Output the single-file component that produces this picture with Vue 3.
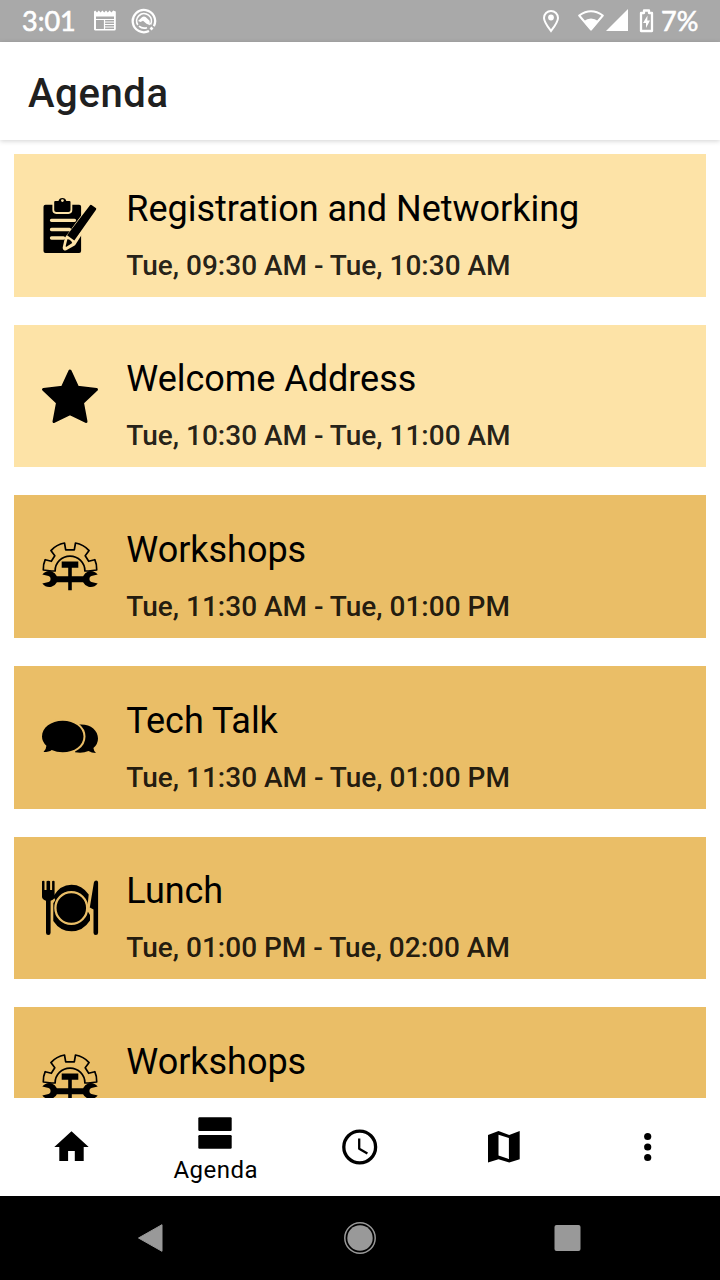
<script setup>
const sessions = [
  { title: 'Registration and Networking', time: 'Tue, 09:30 AM - Tue, 10:30 AM', icon: 'clipboard', tone: 'light' },
  { title: 'Welcome Address', time: 'Tue, 10:30 AM - Tue, 11:00 AM', icon: 'star', tone: 'light' },
  { title: 'Workshops', time: 'Tue, 11:30 AM - Tue, 01:00 PM', icon: 'workshop', tone: 'dark' },
  { title: 'Tech Talk', time: 'Tue, 11:30 AM - Tue, 01:00 PM', icon: 'chat', tone: 'dark' },
  { title: 'Lunch', time: 'Tue, 01:00 PM - Tue, 02:00 AM', icon: 'meal', tone: 'dark' },
  { title: 'Workshops', icon: 'workshop', tone: 'dark' },
]
</script>

<template>
  <div class="screen">
    <div class="status">
      <span class="clock">3:01</span>
      <svg class="news" width="24" height="24" viewBox="0 0 24 24">
        <path fill="#fff" fill-rule="evenodd" d="M1 2.500l1.200-1 1.800 2 1.800-2 1.800 2 1.800-2 1.800 2 1.800-2 1.800 2 1.800-2 1.800 2 1.800-2 2.600 1v17.500a1.500 1.500 0 0 1-1.500 1.500h-19A1.500 1.500 0 0 1 1 20.500zM3 7.500v12.500h18V7.500z" />
        <path stroke="#fff" stroke-width="1.200" fill="none" d="M3 10.500h18M11.500 10.500v9.500M12 13h9M12 15.500h9M12 18h9" />
      </svg>
      <svg class="disc" width="26" height="26" viewBox="0 0 26 26">
        <path d="M18 23.100A11.200 11.200 0 1 1 22.900 18.200" fill="none" stroke="#fff" stroke-width="2.300" />
        <path d="M6.800 17A7.400 7.400 0 1 1 19.500 16.500" fill="none" stroke="#fff" stroke-width="1.700" />
        <path d="M7 13l4-3.800q1.800-1.500 3.600-.2l4 3.700.4 4.600-3.500-1.500-3.500-3-2.500 1.300z" fill="#fff" />
        <path d="M8 18.200q3.500 3 8 1.500" fill="none" stroke="#fff" stroke-width="1.700" />
        <path d="M19.500 19.500l2 2" stroke="#fff" stroke-width="2.600" />
      </svg>
      <span class="fill"></span>
      <svg class="pin" width="18" height="24" viewBox="0 0 18 24">
        <path d="M9 22C5.600 17.500 2 13 2 9a7 7 0 0 1 14 0c0 4-3.600 8.500-7 13z" fill="none" stroke="#fff" stroke-width="2" />
        <circle cx="9" cy="8.500" r="2.900" fill="#fff" />
      </svg>
      <svg class="wifi" width="28" height="24" viewBox="0 0 28 24">
        <path d="M14 20.500L2.200 6.500Q14-2 25.800 6.500z" fill="none" stroke="#fff" stroke-width="2" stroke-linejoin="round" />
        <path d="M14 21.500L6.500 12.200Q14 6.800 21.500 12.200z" fill="#fff" />
      </svg>
      <svg class="signal" width="22" height="24" viewBox="0 0 22 24"><path d="M0 22L22 0v22z" fill="#fff" /></svg>
      <svg class="battery" width="15" height="24" viewBox="0 0 15 24">
        <path d="M2 4h3V1.500h5V4h3v18H2z" fill="none" stroke="#fff" stroke-width="2.300" stroke-linejoin="round" />
        <path d="M8.500 6.500L4 14h3v5l4-7.500H8.300z" fill="#fff" />
      </svg>
      <span class="percent">7%</span>
    </div>

    <header class="header"><h1>Agenda</h1></header>

    <main class="list">
      <article v-for="(s, i) in sessions" :key="i" :class="['card', s.tone]">
        <svg class="icon" viewBox="0 0 60 60">
          <g v-if="s.icon === 'clipboard'">
            <rect x="3.500" y="8.700" width="37.600" height="48.200" rx="2" />
            <path d="M15.200 5.500h3.300a4 4 0 0 1 7.800 0h3.200q1 0 1 1v7.600q0 2-2 2H16.200q-2 0-2-2V6.500q0-1 1-1z" class="cut" stroke-width="3.600" />
            <path d="M15.200 5h3.300a4 4 0 0 1 7.800 0h3.200q1 0 1 1v8.100q0 2-2 2H16.200q-2 0-2-2V6q0-1 1-1z" />
            <circle cx="22.400" cy="4.600" r="1.400" class="cutfill" />
            <path d="M11.500 24.300h23M11.500 33.500h18M11.500 42h12" class="cut" stroke-width="3.300" stroke-linecap="round" />
            <path d="M50.700 9.200L26.300 42.500l-2 9q-.1 1.600 1.600 1.200l8-4.500L56.200 13z" class="cut" stroke-width="3.200" stroke-linejoin="round" />
            <path d="M50.300 9.200L26.300 42l-2.200 10q-.1 1.600 1.600 1.200l8.500-5.200z" class="cutfill" />
            <path d="M50 9.200q.6-.9 1.500-.2l4.300 3.100q.9.700.2 1.600L34.300 44.600l-7.300-5.300z" />
            <path d="M27.400 43.200q3.800.3 4.800 3.900l-5.700 3.600q-1 .4-.8-.7z" />
          </g>
          <path v-else-if="s.icon === 'star'" stroke="#000" stroke-width="3" stroke-linejoin="round"
            d="M30 4l7.500 16.200L56.500 22.500l-14 13.200L46 54.500 30 46.700 14 54.500l3.500-18.800L3.500 22.500l19-2.300z" />
          <g v-else-if="s.icon === 'workshop'">
            <path fill="none" stroke="#000" stroke-width="1.700" stroke-linejoin="round"
              d="M3.300 33Q3 27.500 5.200 22.700l6.100 1.600 3.500-5.500-3.900-5.200Q16.500 7.300 24.500 6l1.200 6.800h8.600L35.500 6q8 1.300 13.600 7.600l-3.900 5.200 3.500 5.500 6.100-1.600Q57 27.500 56.700 33l-8.500 1h-3.300a14.900 14.900 0 0 0-29.800 0h-3.300z" />
            <path d="M21.700 24.500h16.600v6.200h-6.500v22.500h-3.600V30.700h-6.500z" />
            <path d="M2.300 37.600Q6 33 11.500 34.300q3.800 1.300 5.400 5h26.200q1.600-3.700 5.400-5 5.500-1.300 9.200 3.300l-6.300 1.400q-2 .6-2 3t2 2.900l6.300 1.500q-3.700 4.600-9.200 3.300-3.800-1.200-5.400-4.500H16.900q-1.600 3.300-5.400 4.500-5.500 1.300-9.200-3.300l6.300-1.500q2-.5 2-2.900t-2-3z" />
          </g>
          <g v-else-if="s.icon === 'chat'">
            <path d="M39 16.500C50 15.500 58 22 58 30.500q0 5.700-4.600 9.500.2 2.600 2.600 5-4.500 0-7.500-2-6 2.600-13.500 1.200z" />
            <path d="M22.700 12.700C34.500 12.700 43.500 19.500 43.500 28.500S34.500 44.300 22.700 44.300q-6 0-11-2.300-2.600 2-8.200 2 2.800-2.800 2.900-6.300Q2 33.700 2 28.500C2 19.500 11 12.700 22.700 12.700z" class="cut" stroke-width="4" />
            <path d="M22.700 12.700C34.500 12.700 43.500 19.500 43.500 28.500S34.500 44.300 22.700 44.300q-6 0-11-2.300-2.600 2-8.200 2 2.800-2.800 2.900-6.300Q2 33.700 2 28.500C2 19.500 11 12.700 22.700 12.700z" />
          </g>
          <g v-else>
            <path d="M13.200 17.500Q20 5.700 31.500 5.700 42 5.700 48.700 15.500L47.500 27v5L50 36v5.500Q43 52.300 31.500 52.300 20 52.300 13.300 42V24.200l2-3.200z" />
            <circle cx="31.300" cy="29" r="15.900" class="cut" stroke-width="2.300" />
            <path d="M2 2.500q0-.8 1.300-.8t1.200.8V11h2V2.500q0-.8 1.800-.8t1.800.8V11h2V2.500q0-.8 1.200-.8t1.300.8v15.300q0 2.700-4 4v32q0 2.200-2.300 2.200t-2.300-2.200v-32q-4-1.300-4-4z" />
            <path d="M56.200 1.500q1.900 0 1.900 2v50.300q0 2.200-2.300 2.200t-2.300-2.200V30.500l-3.700-2L53.900 3.500q.5-2 2.300-2z" />
          </g>
        </svg>
        <div class="copy">
          <h2>{{ s.title }}</h2>
          <p v-if="s.time">{{ s.time }}</p>
        </div>
      </article>
    </main>

    <nav class="tabs">
      <div class="tab">
        <svg width="40" height="40" viewBox="0 0 40 40"><path d="M19.500 4.300L36.700 20h-5v14h-8.900V24h-6.700v10H7.300V20h-5z" /></svg>
      </div>
      <div class="tab active">
        <svg width="34" height="32" viewBox="0 0 34 32"><rect x=".3" y=".3" width="33.400" height="13.700" rx="1.200" /><rect x=".3" y="18" width="33.400" height="13.700" rx="1.200" /></svg>
        <span>Agenda</span>
      </div>
      <div class="tab">
        <svg width="40" height="40" viewBox="0 0 40 40">
          <circle cx="19.700" cy="20" r="15.900" fill="none" stroke="#000" stroke-width="3.300" />
          <path d="M19.200 11.500v10.200l8.200 4.800" fill="none" stroke="#000" stroke-width="2.300" stroke-linejoin="round" />
        </svg>
      </div>
      <div class="tab">
        <svg width="40" height="40" viewBox="0 0 40 40"><path fill-rule="evenodd" d="M4 8l10.500-4 10.700 3.900L35.700 4v28.200L25.200 35.500 14.500 32.200 4 35.500zM14.500 7.800v20.700l10.400 3.500V11z" /></svg>
      </div>
      <div class="tab">
        <svg width="40" height="40" viewBox="0 0 40 40"><circle cx="19.700" cy="9.500" r="3.600" /><circle cx="19.700" cy="20" r="3.600" /><circle cx="19.700" cy="30.500" r="3.600" /></svg>
      </div>
    </nav>

    <div class="system">
      <svg width="40" height="40" viewBox="0 0 40 40"><path d="M8.500 20L32 6.700v26.600z" fill="#999" stroke="#999" stroke-linejoin="round" /></svg>
      <svg width="40" height="40" viewBox="0 0 40 40"><circle cx="20" cy="20" r="12.700" fill="#999" /><circle cx="20" cy="20" r="15.200" fill="none" stroke="#999" stroke-width="1.500" /></svg>
      <svg width="40" height="40" viewBox="0 0 40 40"><rect x="6.500" y="7" width="26" height="26" rx="2" fill="#999" /></svg>
    </div>
  </div>
</template>

<style>
body { background: #fff; }
</style>

<style scoped>
.screen { width: 720px; height: 1280px; display: flex; flex-direction: column; overflow: hidden; background: #fff; font-family: Roboto, sans-serif; color: #000; }
svg { display: block; flex: none; }
h1, h2, p { margin: 0; font-weight: 400; white-space: nowrap; }
.status { height: 42px; flex: none; background: #a9a9a9; color: #fff; display: flex; align-items: center; padding: 0 22px; box-sizing: border-box; font-family: Lato, sans-serif; -webkit-text-stroke: .6px #fff; }
.clock { width: 71px; font-size: 27px; line-height: 30px; margin-top: -1px; }
.disc { margin-left: 14px; }
.fill { flex: 1; }
.pin { margin-right: 17px; }
.wifi { margin-right: 1px; }
.signal { margin-right: 11px; }
.battery { margin-right: 7.500px; }
.percent { width: 37px; font-size: 27px; line-height: 30px; margin-top: -1px; white-space: nowrap; }
.header { height: 98px; flex: none; display: flex; align-items: center; padding: 6px 28px 0; box-sizing: border-box; background: #fff; box-shadow: 0 1px 5px rgba(0, 0, 0, .18); position: relative; z-index: 1; }
h1 { font-size: 40px; line-height: 48px; font-weight: 500; letter-spacing: .6px; color: #202020; }
.list { flex: 1; min-height: 0; overflow: hidden; padding: 14px 14px 0; display: flex; flex-direction: column; gap: 28.2px; }
.card { height: 142.500px; flex: none; box-sizing: border-box; padding: 32px 26px 0; display: flex; }
.light { background: #fde3a7; --tone: #fde3a7; }
.dark { background: #eabe67; --tone: #eabe67; }
.icon { width: 60px; height: 60px; margin: 10px 26.300px 0 0; }
.copy { padding-top: .7px; }
.cut { fill: none; stroke: var(--tone); }
.cutfill { fill: var(--tone); }
h2 { font-size: 36px; line-height: 44px; letter-spacing: -.03px; }
p { font-size: 28px; line-height: 34px; font-weight: 500; margin-top: 18px; color: rgba(0, 0, 0, .87); }
.tabs { height: 98px; flex: none; display: grid; grid-template-columns: repeat(5, 144px); background: #fff; }
.tab { display: flex; flex-direction: column; align-items: center; justify-content: center; }
.tab.active { justify-content: flex-start; padding: 19px 2px 0 0; }
.tab span { font-size: 24px; line-height: 28px; margin: 7px 0 0 1.500px; letter-spacing: .5px; }
.system { height: 84px; flex: none; background: #000; display: flex; align-items: center; justify-content: space-between; padding: 0 132px 0 130px; box-sizing: border-box; }
.system svg:nth-child(2) { margin-left: 2px; }
</style>
